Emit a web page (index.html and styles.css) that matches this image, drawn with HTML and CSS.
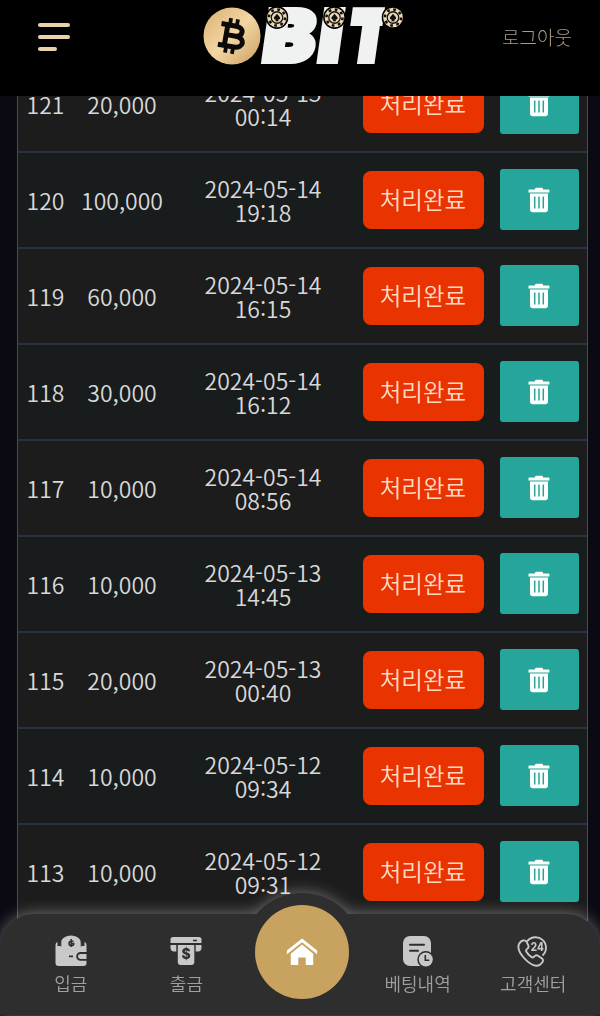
FILE: index.html
```
<!DOCTYPE html>
<html lang="ko">
<head>
    <meta charset="UTF-8">
    <meta name="viewport" content="width=device-width, initial-scale=1.0">
    <title>BIT</title>
    <link rel="stylesheet" href="styles.css">
</head>
<body>
    <!-- shared icons -->
    <svg class="sprite" width="0" height="0">
        <symbol id="trash" viewBox="0 0 22 26">
            <path d="M7 2.600V2Q7 .8 8.200 .8h5.600Q15 .8 15 2v.6h5.600q.9 0 .9.900v2.100H.5V3.500q0-.9.9-.9z" fill="#fff"/>
            <path d="M2 6.500h18v16.300a2.400 2.400 0 0 1-2.400 2.400H4.400a2.400 2.400 0 0 1-2.400-2.400z" fill="#fff"/>
            <path d="M6.700 9.500v12M11 9.500v12M15.300 9.500v12" stroke="#26a69a" stroke-width="1.500"/>
        </symbol>
        <symbol id="chip" viewBox="-11 -11 22 22">
            <circle r="10.900" fill="#000"/>
            <circle r="9.400" fill="#ecd9b4"/>
            <circle r="7.700" fill="none" stroke="#111" stroke-width="2.400" stroke-dasharray="2.600 3.447"/>
            <circle r="5.500" fill="#ecd9b4" stroke="#111" stroke-width="1.200"/>
            <path d="M0-3.500L3 0Q3.300 2.300 1 2l.6 1.600h-3.200L-1 2Q-3.300 2.300-3 0z" fill="#111"/>
        </symbol>
    </svg>

    <header class="header">
        <button class="menu" aria-label="menu">
            <span></span>
            <span></span>
            <span></span>
        </button>
        <svg class="logo" width="204" height="64" viewBox="0 0 204 64">
            <defs>
                <linearGradient id="gold" x1="0" y1="0" x2="1" y2="1">
                    <stop offset="0" stop-color="#d9b06f"/>
                    <stop offset=".5" stop-color="#f3d6a3"/>
                    <stop offset="1" stop-color="#c99f61"/>
                </linearGradient>
                <clipPath id="t-cut">
                    <rect x="130" y="-60" width="44.500" height="70"/>
                </clipPath>
            </defs>
            <circle cx="29" cy="31" r="28.500" fill="url(#gold)"/>
            <g transform="translate(28.500 31) rotate(10)" fill="none" stroke="#0a0a0a" stroke-width="5">
                <path d="M-12-10.500H3c9 0 9 10 0 10H-5M-12 10.500H4c10.500 0 10.500-11 0-11M-5.500-10.500v21"/>
                <path d="M-3.500-17.500v7M3.500-17.500v7M-3.500 10.500v7M3.500 10.500v7" stroke-width="3.800"/>
            </g>
            <g class="logo-text" transform="translate(0 56) skewX(-8)">
                <text x="58" y="0" textLength="51" lengthAdjust="spacingAndGlyphs">B</text>
                <text x="113.500" y="0" textLength="22" lengthAdjust="spacingAndGlyphs">I</text>
                <text class="logo-t" x="144" y="-1" textLength="38" lengthAdjust="spacingAndGlyphs" clip-path="url(#t-cut)">T</text>
            </g>
            <use href="#chip" x="62.500" y="1" width="23" height="23"/>
            <use href="#chip" x="120" y="1" width="23" height="23"/>
            <use href="#chip" x="178.500" y="1" width="23" height="23"/>
        </svg>
        <a class="logout" href="#">로그아웃</a>
    </header>

    <main class="content">
        <table class="history">
            <colgroup>
                <col class="col-no">
                <col class="col-amount">
                <col class="col-date">
                <col class="col-status">
                <col class="col-delete">
            </colgroup>
            <tbody>
                <tr>
                    <td>121</td>
                    <td>20,000</td>
                    <td>2024-05-15<br>00:14</td>
                    <td><span class="status">처리완료</span></td>
                    <td><button class="delete"><svg><use href="#trash"/></svg></button></td>
                </tr>
                <tr>
                    <td>120</td>
                    <td>100,000</td>
                    <td>2024-05-14<br>19:18</td>
                    <td><span class="status">처리완료</span></td>
                    <td><button class="delete"><svg><use href="#trash"/></svg></button></td>
                </tr>
                <tr>
                    <td>119</td>
                    <td>60,000</td>
                    <td>2024-05-14<br>16:15</td>
                    <td><span class="status">처리완료</span></td>
                    <td><button class="delete"><svg><use href="#trash"/></svg></button></td>
                </tr>
                <tr>
                    <td>118</td>
                    <td>30,000</td>
                    <td>2024-05-14<br>16:12</td>
                    <td><span class="status">처리완료</span></td>
                    <td><button class="delete"><svg><use href="#trash"/></svg></button></td>
                </tr>
                <tr>
                    <td>117</td>
                    <td>10,000</td>
                    <td>2024-05-14<br>08:56</td>
                    <td><span class="status">처리완료</span></td>
                    <td><button class="delete"><svg><use href="#trash"/></svg></button></td>
                </tr>
                <tr>
                    <td>116</td>
                    <td>10,000</td>
                    <td>2024-05-13<br>14:45</td>
                    <td><span class="status">처리완료</span></td>
                    <td><button class="delete"><svg><use href="#trash"/></svg></button></td>
                </tr>
                <tr>
                    <td>115</td>
                    <td>20,000</td>
                    <td>2024-05-13<br>00:40</td>
                    <td><span class="status">처리완료</span></td>
                    <td><button class="delete"><svg><use href="#trash"/></svg></button></td>
                </tr>
                <tr>
                    <td>114</td>
                    <td>10,000</td>
                    <td>2024-05-12<br>09:34</td>
                    <td><span class="status">처리완료</span></td>
                    <td><button class="delete"><svg><use href="#trash"/></svg></button></td>
                </tr>
                <tr>
                    <td>113</td>
                    <td>10,000</td>
                    <td>2024-05-12<br>09:31</td>
                    <td><span class="status">처리완료</span></td>
                    <td><button class="delete"><svg><use href="#trash"/></svg></button></td>
                </tr>
            </tbody>
        </table>
    </main>

    <nav class="tabbar">
        <a class="tab" href="#">
            <svg width="32" height="32" viewBox="0 0 32 32">
                <path d="M2.500 7Q.5 7.500.5 10v18q0 3 3 3h25q3 0 3-3V10q0-2.500-2-3v4h-3V10C26.500 4 22 .5 16 .5S5.500 4 5.500 10v1h-3z" fill="#c8c8c8"/>
                <path d="M32 18h-6.500a3.400 3.400 0 0 0 0 6.800H32M14 21.300h4" fill="none" stroke="#2e2e2e" stroke-width="1.800"/>
                <path d="M5.800 6v5.500M26.200 6v5.500" fill="none" stroke="#2e2e2e" stroke-width="1"/>
                <path d="M18.500 6.200h-2.200a2.300 2.300 0 0 0 0 4.600q2.500 0 2.500-2.200h-2.500M16.200 4v8" fill="none" stroke="#2e2e2e" stroke-width="1.500"/>
            </svg>
            <span>입금</span>
        </a>
        <a class="tab" href="#">
            <svg width="32" height="32" viewBox="0 0 32 32">
                <path d="M3 2h26q2.500 0 2.500 2.500V8H.5V4.500Q.5 2 3 2zM.5 10h5.800v6.500H4q-3.500 0-3.500-4zM25.700 10h5.800v2.500q0 4-3.500 4h-2.300zM7.800 10h16.500v17q0 3-3 3H10.800q-3 0-3-3z" fill="#c8c8c8"/>
                <path d="M23 5.500h4" stroke="#2e2e2e" stroke-width="1.500"/>
                <text class="icon-text" x="16" y="24" font-size="14" fill="#2e2e2e">$</text>
            </svg>
            <span>출금</span>
        </a>
        <a class="tab tab-home" href="#" aria-label="home">
            <svg width="32" height="28" viewBox="0 0 34 30">
                <path d="M17 .5L.8 13.500v4L17 4.500l16.200 13v-4z" fill="#fff"/>
                <path d="M17 7L5 16.800V29h8v-8h8v8h8V16.800z" fill="#fff"/>
            </svg>
        </a>
        <a class="tab" href="#">
            <svg width="32" height="32" viewBox="0 0 32 32">
                <rect x="1" y="1" width="28" height="30" rx="7" fill="#c8c8c8"/>
                <path d="M8 9.700h14M8 15.700h8" stroke="#2e2e2e" stroke-width="2" stroke-linecap="round"/>
                <circle cx="23.800" cy="24.500" r="8.500" fill="#2e2e2e"/>
                <circle cx="23.800" cy="24.500" r="7" fill="#c8c8c8"/>
                <path d="M23.300 20v5.200h4" fill="none" stroke="#2e2e2e" stroke-width="1.600"/>
            </svg>
            <span>베팅내역</span>
        </a>
        <a class="tab" href="#">
            <svg width="32" height="32" viewBox="0 0 32 32" fill="none" stroke="#c8c8c8" stroke-width="1.900">
                <path d="M10 6.500A10.500 10.500 0 1 1 25.500 20.500"/>
                <path d="M6 5.500Q3.500 6 2 9c-1.500 3.500 0 7.500 3 11.500s7.500 8 11.500 9.700c3.500 1.300 7-.2 9-3.200.9-1.500.7-2.500-.5-3.500l-4-2.800c-1.500-.9-2.600-.6-3.500.6-.8 1.200-1.800 1.500-3.200.6-2.300-1.500-3.900-3.300-5-5.400-.6-1.300-.2-2.100 1-2.800 1.300-.8 1.700-1.800 1-3.400L9.500 6.700Q8.500 5 6 5.500z"/>
                <text class="icon-text" x="20.300" y="15.800" font-size="11.500" fill="#c8c8c8" stroke="none" textLength="13" lengthAdjust="spacingAndGlyphs">24</text>
            </svg>
            <span>고객센터</span>
        </a>
    </nav>
</body>
</html>
```
FILE: styles.css
```
* {
    box-sizing: border-box;
}

body {
    margin: 0;
    height: 1016px;
    overflow: hidden;
    background-color: #0b0a12;
    color: #d8d8d8;
    font-family: "Noto Sans CJK KR", "Noto Sans", sans-serif;
    font-weight: 350;
}

a {
    text-decoration: none;
}

button {
    border: none;
    padding: 0;
    cursor: pointer;
}

.sprite {
    position: absolute;
}

/* header */
.header {
    position: fixed;
    top: 0;
    left: 0;
    z-index: 2;
    display: flex;
    justify-content: space-between;
    width: 100%;
    height: 96px;
    padding: 5px 28px 0 37.500px;
    background-color: #000;
}

.menu {
    display: flex;
    flex-direction: column;
    gap: 7.500px;
    width: 134px;
    height: 40px;
    margin-top: 17.500px;
    background: none;
}

.menu span {
    width: 32.500px;
    height: 4.500px;
    border-radius: 3px;
    background-color: #e8d3ad;
}

.menu span:last-child {
    width: 19px;
}

.logo {
    margin-left: 31.500px;
    overflow: visible;
}

.logo-text {
    font-family: Inter, sans-serif;
    font-size: 70px;
    font-weight: 900;
    fill: #f0f1f1;
    stroke: #f0f1f1;
    stroke-width: 6px;
}

.logo-t {
    font-size: 67px;
    stroke-width: 8px;
}

.logout {
    margin-left: auto;
    color: #a99a84;
    font-size: 19px;
    font-weight: 300;
    line-height: 63px;
}

/* list */
.content {
    margin: 57px 12px 0 17px;
}

.history {
    width: 571px;
    border-collapse: separate;
    border-spacing: 0;
    table-layout: fixed;
    border-left: 1px solid #4a4a50;
    border-right: 1px solid #4a4a50;
    font-size: 23px;
    line-height: 24px;
    text-align: center;
}

.col-no { width: 55px; }
.col-amount { width: 98px; }
.col-date { width: 184px; }
.col-status { width: 136px; }
.col-delete { width: 96px; }

.history tr {
    height: 96px;
    background-color: #1c1c1c;
}

.history tr:nth-child(even) {
    background-color: #191c1d;
}

.history td {
    padding: 0 0 1px;
    border-bottom: 2px solid #283340;
    vertical-align: middle;
}

.status {
    display: block;
    width: 121px;
    height: 58px;
    margin: 0 auto;
    border-radius: 8px;
    background-color: #e93300;
    color: #ffd9c4;
    font-size: 23.500px;
    line-height: 57px;
}

.delete {
    display: flex;
    align-items: center;
    justify-content: center;
    width: 79px;
    height: 61px;
    margin: 0 auto;
    border-radius: 3px;
    background-color: #26a69a;
}

.delete svg {
    width: 22px;
    height: 26px;
}

/* bottom tabs */
.tabbar {
    position: fixed;
    left: 0;
    bottom: 1px;
    z-index: 2;
    display: flex;
    width: 100%;
    height: 101px;
    padding: 0 9px 0 13px;
    border-radius: 34px 34px 0 0;
    background-color: #2e2e2e;
    filter: drop-shadow(0 0 8px rgba(255, 255, 255, .4));
}

/* round bump behind the home button */
.tabbar::before {
    content: "";
    position: absolute;
    top: -21px;
    left: 242px;
    width: 120px;
    height: 120px;
    border-radius: 50%;
    background-color: #2e2e2e;
}

.tab {
    position: relative;
    flex: 1;
    display: flex;
    flex-direction: column;
    align-items: center;
    padding-top: 21px;
    color: #a0a0a0;
    font-size: 18px;
    line-height: 33px;
    white-space: nowrap;
}

.tab-home {
    flex: none;
    align-self: flex-start;
    justify-content: center;
    width: 94px;
    height: 94px;
    margin: -9px 10.800px 0;
    padding: 0;
    border-radius: 50%;
    background-color: #c8a360;
}

.icon-text {
    font-family: Inter, sans-serif;
    font-weight: 800;
    text-anchor: middle;
}
```
